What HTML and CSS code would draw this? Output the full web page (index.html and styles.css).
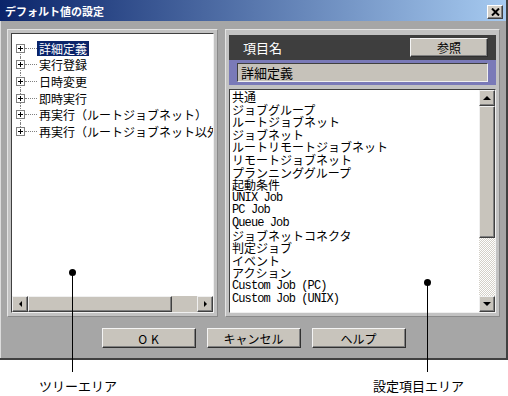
FILE: index.html
```html
<!DOCTYPE html>
<html lang="ja">
<head>
    <meta charset="UTF-8">
    <title>デフォルト値の設定</title>
    <link rel="stylesheet" href="styles.css">
</head>
<body>
<div class="page">
    <div class="dialog">
        <!-- タイトルバー -->
        <div class="titlebar">
            <span class="title">デフォルト値の設定</span>
            <span class="close-btn">
                <svg width="9" height="8" viewBox="0 0 9 8"><path d="M1 0.5 L8 7.5 M8 0.5 L1 7.5" stroke="#000" stroke-width="2" fill="none"/></svg>
            </span>
        </div>

        <div class="dialog-body">
            <div class="panels">
                <!-- ツリーエリア -->
                <div class="panel tree-panel">
                    <div class="tree-box">
                        <ul class="tree">
                            <li class="node"><span class="expander"></span><span class="branch"></span><span class="label selected">詳細定義</span></li>
                            <li class="node"><span class="expander"></span><span class="branch"></span><span class="label">実行登録</span></li>
                            <li class="node"><span class="expander"></span><span class="branch"></span><span class="label">日時変更</span></li>
                            <li class="node"><span class="expander"></span><span class="branch"></span><span class="label">即時実行</span></li>
                            <li class="node"><span class="expander"></span><span class="branch"></span><span class="label">再実行（ルートジョブネット）</span></li>
                            <li class="node"><span class="expander"></span><span class="branch"></span><span class="label">再実行（ルートジョブネット以外）</span></li>
                        </ul>
                        <div class="hscroll">
                            <span class="sb-btn"><i class="arrow arrow-left"></i></span>
                            <span class="thumb"></span>
                            <span class="track"></span>
                            <span class="sb-btn"><i class="arrow arrow-right"></i></span>
                        </div>
                    </div>
                </div>

                <!-- 設定項目エリア -->
                <div class="panel item-panel">
                    <div class="item-header">
                        <span class="item-title">項目名</span>
                        <button class="btn ref-btn">参照</button>
                    </div>
                    <div class="item-name-bar">
                        <div class="item-name">詳細定義</div>
                    </div>
                    <div class="item-list">
                        <ul class="items">
                            <li>共通</li>
                            <li>ジョブグループ</li>
                            <li>ルートジョブネット</li>
                            <li>ジョブネット</li>
                            <li>ルートリモートジョブネット</li>
                            <li>リモートジョブネット</li>
                            <li>プランニンググループ</li>
                            <li>起動条件</li>
                            <li class="ascii">UNIX Job</li>
                            <li class="ascii">PC Job</li>
                            <li class="ascii">Queue Job</li>
                            <li>ジョブネットコネクタ</li>
                            <li>判定ジョブ</li>
                            <li>イベント</li>
                            <li>アクション</li>
                            <li class="ascii">Custom Job (PC)</li>
                            <li class="ascii">Custom Job (UNIX)</li>
                        </ul>
                        <div class="vscroll">
                            <span class="sb-btn"><i class="arrow arrow-up"></i></span>
                            <span class="thumb"></span>
                            <span class="track"></span>
                            <span class="sb-btn"><i class="arrow arrow-down"></i></span>
                        </div>
                    </div>
                </div>
            </div>

            <div class="actions">
                <button class="btn ok-btn">OK</button>
                <button class="btn">キャンセル</button>
                <button class="btn">ヘルプ</button>
            </div>
        </div>
    </div>

    <!-- 説明 -->
    <div class="captions">
        <span>ツリーエリア</span>
        <span>設定項目エリア</span>
    </div>
    <div class="pointer pointer-tree"></div>
    <div class="pointer pointer-items"></div>
</div>
</body>
</html>
```

FILE: styles.css
```css
body {
    margin: 0;
    background: #fff;
    font-family: "Noto Sans CJK JP", sans-serif;
    font-size: 12px;
    color: #000;
}

.page {
    position: relative;
    width: 508px;
    height: 396px;
}

.dialog {
    box-sizing: border-box;
    width: 508px;
    height: 360px;
    background: #a6a6a6;
    border-right: 2px solid #404040;
    border-bottom: 2px solid #404040;
    box-shadow: inset 1px 0 #dcdcdc;
    display: flex;
    flex-direction: column;
}

/* タイトルバー */
.titlebar {
    height: 21px;
    flex: none;
    display: flex;
    align-items: center;
    justify-content: space-between;
    padding: 0 3px 0 5px;
    background: linear-gradient(to right, #0a246a, #a6caf0);
    color: #fff;
}

.title {
    font-size: 11px;
    font-weight: bold;
}

.close-btn {
    box-sizing: border-box;
    width: 16px;
    height: 14px;
    margin-top: 2px;
    display: flex;
    align-items: center;
    justify-content: center;
    background: #d4d0c8;
    border: 1px solid;
    border-color: #fff #404040 #404040 #fff;
    box-shadow: inset -1px -1px #808080;
}

.dialog-body {
    flex: 1;
    display: flex;
    flex-direction: column;
    padding: 8px 6px 0 7px;
}

.panels {
    display: flex;
    gap: 7px;
    height: 288px;
}

.panel {
    box-sizing: border-box;
    display: flex;
    flex-direction: column;
    padding: 3px;
    background: #c2c2c2;
    border: 1px solid;
    border-color: #e4e4e4 #8a8a8a #8a8a8a #e4e4e4;
}

.tree-panel {
    width: 211px;
}

.item-panel {
    width: 275px;
    padding-top: 5px;
}

/* ツリー */
.tree-box {
    flex: 1;
    min-height: 0;
    display: flex;
    flex-direction: column;
    background: #fff;
    border: 1px solid;
    border-color: #404040 #f0f0f0 #f0f0f0 #404040;
}

.tree {
    flex: 1;
    list-style: none;
    margin: 0;
    padding: 6px 0 0;
    overflow: hidden;
}

.node {
    position: relative;
    display: flex;
    align-items: center;
    height: 16.6px;
    white-space: nowrap;
}

.node::before {
    content: "";
    position: absolute;
    left: 8px;
    top: 0;
    bottom: 0;
    border-left: 1px dotted #808080;
}

.node:first-child::before {
    top: 50%;
}

.node:last-child::before {
    bottom: 50%;
}

.expander {
    position: relative;
    z-index: 1;
    flex: none;
    box-sizing: border-box;
    width: 9px;
    height: 9px;
    margin-left: 4px;
    background: #fff;
    border: 1px solid #808080;
}

.expander::before {
    content: "";
    position: absolute;
    left: 1px;
    top: 3px;
    width: 5px;
    height: 1px;
    background: #000;
}

.expander::after {
    content: "";
    position: absolute;
    left: 3px;
    top: 1px;
    width: 1px;
    height: 5px;
    background: #000;
}

.branch {
    flex: none;
    width: 12px;
    border-top: 1px dotted #808080;
}

.label {
    padding: 0 2px;
    line-height: 15px;
}

.label.selected {
    background: #0a246a;
    color: #fff;
}

/* スクロールバー */
.sb-btn,
.thumb {
    box-sizing: border-box;
    flex: none;
    background: #c8c4bc;
    border: 1px solid;
    border-color: #f0f0f0 #404040 #404040 #f0f0f0;
    box-shadow: inset -1px -1px #808080;
}

.sb-btn {
    width: 16px;
    height: 16px;
    display: flex;
    align-items: center;
    justify-content: center;
}

.arrow {
    width: 0;
    height: 0;
    border: 0 solid transparent;
}

.arrow-up {
    border-width: 0 4px 4px;
    border-bottom-color: #000;
}

.arrow-down {
    border-width: 4px 4px 0;
    border-top-color: #000;
}

.arrow-left {
    border-width: 3px 3px 3px 0;
    border-right-color: #000;
}

.arrow-right {
    border-width: 3px 0 3px 3px;
    border-left-color: #000;
}

.hscroll {
    flex: none;
    display: flex;
    height: 16px;
}

.hscroll .thumb {
    width: 144px;
}

.hscroll .track {
    flex: 1;
    background: #c8c4bc;
}

.vscroll {
    flex: none;
    width: 16px;
    display: flex;
    flex-direction: column;
}

.vscroll .thumb {
    height: 132px;
}

.vscroll .track {
    flex: 1;
    background: repeating-conic-gradient(#fff 0 25%, #d4d0c8 0 50%) 0 0 / 2px 2px;
}

/* 設定項目 */
.item-header {
    flex: none;
    height: 25px;
    box-sizing: border-box;
    display: flex;
    align-items: center;
    justify-content: space-between;
    padding: 0 8px 0 14px;
    background: #3e3e3e;
    color: #fff;
    font-size: 13px;
}

.item-name-bar {
    flex: none;
    height: 25px;
    box-sizing: border-box;
    padding: 3px 8px;
    background: #7a7ab8;
}

.item-name {
    box-sizing: border-box;
    height: 19px;
    padding-left: 3px;
    line-height: 17px;
    font-size: 13px;
    background: #c6c2ba;
    border: 1px solid;
    border-color: #404040 #f0f0f0 #f0f0f0 #404040;
}

.item-list {
    flex: 1;
    min-height: 0;
    margin-top: 4px;
    display: flex;
    background: #fff;
    border: 1px solid;
    border-color: #404040 #f0f0f0 #f0f0f0 #404040;
}

.items {
    flex: 1;
    list-style: none;
    margin: 0;
    padding: 1px 0 0 2px;
    overflow: hidden;
    line-height: 12.6px;
    white-space: nowrap;
}

.items .ascii {
    font-family: "Liberation Mono", monospace;
    font-size: 12px;
    letter-spacing: -0.9px;
}

/* ボタン */
.btn {
    box-sizing: border-box;
    padding: 0;
    font-family: inherit;
    font-size: 12px;
    color: #000;
    background: #c8c4bc;
    border: 1px solid;
    border-color: #f4f4f4 #303030 #303030 #f4f4f4;
    box-shadow: inset -1px -1px #808080;
}

.ref-btn {
    width: 78px;
    height: 19px;
}

.actions {
    display: flex;
    justify-content: center;
    gap: 11px;
    margin-top: 11px;
}

.actions .btn {
    width: 94px;
    height: 20px;
}

.ok-btn {
    letter-spacing: 4px;
    text-indent: 4px;
}

/* 説明 */
.captions {
    display: flex;
    justify-content: space-between;
    padding: 16px 44px 0 39px;
    font-size: 13px;
    line-height: 20px;
}

.pointer {
    position: absolute;
    width: 1px;
    background: #000;
}

.pointer::before {
    content: "";
    position: absolute;
    left: -3px;
    top: -3px;
    width: 7px;
    height: 7px;
    border-radius: 50%;
    background: #000;
}

.pointer-tree {
    left: 72px;
    top: 272px;
    height: 100px;
}

.pointer-items {
    left: 427px;
    top: 282px;
    height: 90px;
}
```
